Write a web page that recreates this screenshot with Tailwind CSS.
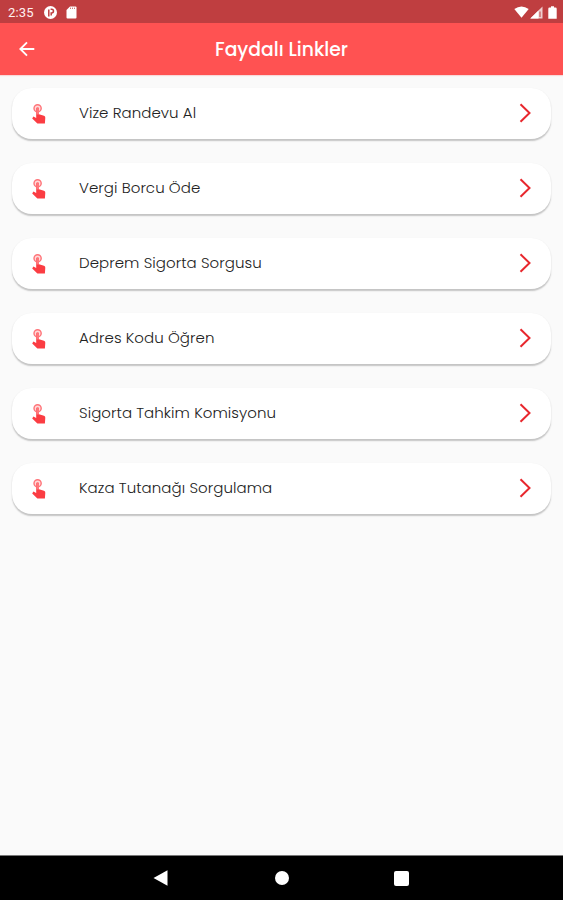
<!DOCTYPE html>
<html lang="tr">
<head>
<meta charset="utf-8">
<title>Faydalı Linkler</title>
<script src="https://cdn.jsdelivr.net/npm/@tailwindcss/browser@4"></script>
</head>
<body class="w-[563px] h-[900px] overflow-hidden flex flex-col bg-[#fafafa] font-[Poppins,Inter,sans-serif]">
<svg class="hidden">
  <symbol id="touch" viewBox="0 0 14 20">
    <circle cx="5.6" cy="4.3" r="3.6" fill="#ffdada" stroke="#ff7479" stroke-width="1.4"/>
    <path d="M4.2 4.8Q4.2 3.4 5.6 3.4T7 4.8V10.2L12 11.8Q13.4 12.3 13.3 13.7L12.9 19.5H5.4L.2 14.6L1.4 12.6L4.2 14Z" fill="#fb3d43"/>
    <path d="M4.2 4.8Q4.2 3.4 5.6 3.4T7 4.8V10.5H4.2Z" fill="#ff777b"/>
  </symbol>
  <symbol id="next" viewBox="0 0 12 20">
    <path d="M1.5 1.3L10.5 10L1.5 18.7" fill="none" stroke="#e8272d" stroke-width="2"/>
  </symbol>
</svg>
<div class="h-[23px] shrink-0 bg-[#bf3e40] flex items-center pl-2 pr-[6px] text-white">
  <span class="w-[27px] pt-[2px] text-[13px] leading-none tracking-[0.2px] text-[#fff0f0] font-[Roboto,sans-serif]">2:35</span>
  <svg class="ml-[9px] mt-px w-[13px] h-[13px]" viewBox="0 0 13 13"><circle cx="6.5" cy="6.5" r="6.5" fill="#fff"/><path d="M4.8 10.5V3.4M6.6 3.2H7.6A1.9 1.9 0 0 1 7.6 7H7.2V9.6" fill="none" stroke="#bf3e40" stroke-width="1.5"/></svg>
  <svg class="ml-[9px] mt-px w-[11px] h-[13px]" viewBox="0 0 11 13"><path d="M4 .5H9.5Q10.5.5 10.5 1.5V11.5Q10.5 12.5 9.5 12.5H1.5Q.5 12.5.5 11.5V4Z" fill="#fff"/><path d="M4.5 1.6V3M6.5 1.6V3M8.5 1.6V3" stroke="#bf3e40" stroke-width=".7"/></svg>
  <svg class="ml-auto mt-px w-[15px] h-[12px]" viewBox="0 0 15 12"><path d="M.3 3Q7.5-2.2 14.7 3L7.5 11.8Z" fill="#fff"/></svg>
  <svg class="ml-px mt-px w-[13px] h-[13px]" viewBox="0 0 13 13"><path d="M.3 12.5L12.5.5V12.5Z" fill="#fff" fill-opacity=".75"/><path d="M.3 12.5L8.5 4.5V12.5Z" fill="#fff"/><path d="M10 5.5V11" stroke="#bf3e40" stroke-width="1"/></svg>
  <svg class="ml-[5px] mt-px w-[9px] h-[13px]" viewBox="0 0 9 13"><path d="M3 .3H6V1.5H7.5Q8.7 1.5 8.7 2.7V12.7H.3V2.7Q.3 1.5 1.5 1.5H3Z" fill="#fff"/></svg>
</div>
<header class="h-[52px] shrink-0 bg-[#ff5252] flex items-center px-[19px] shadow-[0_1px_1px_#f8d9d9]">
  <svg class="w-4 h-4" viewBox="0 0 16 16"><path d="M15.3 8H1.5M8 1.3L1.3 8L8 14.7" fill="none" stroke="#fff" stroke-width="1.9"/></svg>
  <h1 class="flex-1 pr-4 pt-0.5 text-center text-white text-[18.75px] leading-6 font-medium">Faydalı Linkler</h1>
</header>
<main class="flex-1 px-3 pt-[13px] flex flex-col gap-6 text-[15px] leading-5 tracking-[0.06px] font-light text-[#222]">
  <div class="h-[51px] rounded-[20px] bg-white shadow-[0_1.5px_1.5px_#00000038] flex items-center pl-5 pr-5"><svg class="w-[14px] h-5 mt-px"><use href="#touch"/></svg><span class="ml-[33px] mb-0.5">Vize Randevu Al</span><svg class="ml-auto mb-px w-3 h-5"><use href="#next"/></svg></div>
  <div class="h-[51px] rounded-[20px] bg-white shadow-[0_1.5px_1.5px_#00000038] flex items-center pl-5 pr-5"><svg class="w-[14px] h-5 mt-px"><use href="#touch"/></svg><span class="ml-[33px] mb-0.5">Vergi Borcu Öde</span><svg class="ml-auto mb-px w-3 h-5"><use href="#next"/></svg></div>
  <div class="h-[51px] rounded-[20px] bg-white shadow-[0_1.5px_1.5px_#00000038] flex items-center pl-5 pr-5"><svg class="w-[14px] h-5 mt-px"><use href="#touch"/></svg><span class="ml-[33px] mb-0.5">Deprem Sigorta Sorgusu</span><svg class="ml-auto mb-px w-3 h-5"><use href="#next"/></svg></div>
  <div class="h-[51px] rounded-[20px] bg-white shadow-[0_1.5px_1.5px_#00000038] flex items-center pl-5 pr-5"><svg class="w-[14px] h-5 mt-px"><use href="#touch"/></svg><span class="ml-[33px] mb-0.5">Adres Kodu Öğren</span><svg class="ml-auto mb-px w-3 h-5"><use href="#next"/></svg></div>
  <div class="h-[51px] rounded-[20px] bg-white shadow-[0_1.5px_1.5px_#00000038] flex items-center pl-5 pr-5"><svg class="w-[14px] h-5 mt-px"><use href="#touch"/></svg><span class="ml-[33px] mb-0.5">Sigorta Tahkim Komisyonu</span><svg class="ml-auto mb-px w-3 h-5"><use href="#next"/></svg></div>
  <div class="h-[51px] rounded-[20px] bg-white shadow-[0_1.5px_1.5px_#00000038] flex items-center pl-5 pr-5"><svg class="w-[14px] h-5 mt-px"><use href="#touch"/></svg><span class="ml-[33px] mb-0.5">Kaza Tutanağı Sorgulama</span><svg class="ml-auto mb-px w-3 h-5"><use href="#next"/></svg></div>
</main>
<nav class="h-[45px] shrink-0 border-t border-[#777] bg-black flex items-center pl-[153px]">
  <svg class="w-[15px] h-4" viewBox="0 0 15 16"><path d="M.5 8L14.5.3V15.7Z" fill="#fff"/></svg>
  <span class="ml-[107px] w-[14px] h-[14px] rounded-full bg-white"></span>
  <span class="ml-[105px] w-[15px] h-[15px] rounded-[2px] bg-white"></span>
</nav>
</body>
</html>
